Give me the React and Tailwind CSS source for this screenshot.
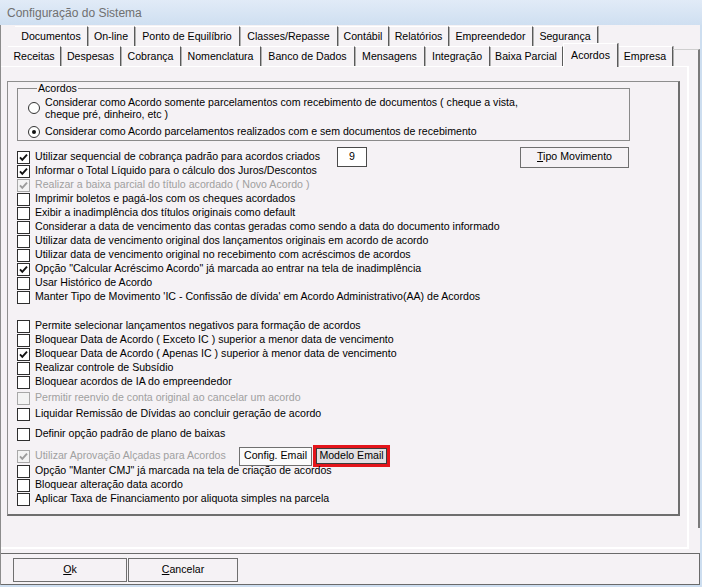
import React from "react";

const topTabs = [
  { label: "Documentos", w: "w-[73px]" },
  { label: "On-line", w: "w-[47px]" },
  { label: "Ponto de Equilíbrio", w: "w-[105px]" },
  { label: "Classes/Repasse", w: "w-[98px]" },
  { label: "Contábil", w: "w-[51px]" },
  { label: "Relatórios", w: "w-[60px]" },
  { label: "Empreendedor", w: "w-[84px]" },
  { label: "Segurança", w: "w-[65px]" },
];

const bottomTabs = [
  { label: "Receitas", w: "w-[53px]" },
  { label: "Despesas", w: "w-[60px]" },
  { label: "Cobrança", w: "w-[60px]" },
  { label: "Nomenclatura", w: "w-[80px]" },
  { label: "Banco de Dados", w: "w-[94px]" },
  { label: "Mensagens", w: "w-[70px]" },
  { label: "Integração", w: "w-[65px]" },
  { label: "Baixa Parcial", w: "w-[73px]" },
  { label: "Acordos", w: "w-[55px]", active: true },
  { label: "Empresa", w: "w-[55px]" },
];

const groupA = [
  { label: "Informar o Total Líquido para o cálculo dos Juros/Descontos", checked: true },
  { label: "Realizar a baixa parcial do título acordado ( Novo Acordo )", checked: true, disabled: true },
  { label: "Imprimir boletos e pagá-los com os cheques acordados" },
  { label: "Exibir a inadimplência dos títulos originais como default" },
  { label: "Considerar a data de vencimento das contas geradas como sendo a data do documento informado" },
  { label: "Utilizar data de vencimento original dos lançamentos originais em acordo de acordo" },
  { label: "Utilizar data de vencimento original no recebimento com acréscimos de acordos" },
  { label: "Opção \"Calcular Acréscimo Acordo\" já marcada ao entrar na tela de inadimplência", checked: true },
  { label: "Usar Histórico de Acordo" },
  { label: "Manter Tipo de Movimento 'IC - Confissão de dívida' em Acordo Administrativo(AA) de Acordos" },
];

const Box = ({ checked, disabled }) => (
  <span
    className={`w-[13px] h-[13px] shrink-0 border flex items-center justify-center ${
      disabled ? "border-[#a8a8a8] bg-[#f3f3f3]" : "border-[#2e2e2e] bg-white"
    }`}
  >
    {checked && (
      <svg width="9" height="9" viewBox="0 0 9 9">
        <path
          d="M1 4.3 L3.3 6.8 L8 1.6"
          fill="none"
          stroke={disabled ? "#9c9c9c" : "#111"}
          strokeWidth="1.9"
        />
      </svg>
    )}
  </span>
);

const Row = ({ label, checked, disabled, className = "", labelClass = "", children }) => (
  <div className={`flex items-center h-[14px] ${className}`}>
    <Box checked={checked} disabled={disabled} />
    <span className={`ml-[5px] whitespace-nowrap ${disabled ? "text-[#a0a0a0]" : ""} ${labelClass}`}>
      {label}
    </span>
    {children}
  </div>
);

const Radio = ({ checked }) => (
  <span className="w-[12px] h-[12px] shrink-0 rounded-full border border-[#333] bg-white flex items-center justify-center">
    {checked && <span className="w-[4px] h-[4px] rounded-full bg-[#111]" />}
  </span>
);

const Tab = ({ label, w, active }) =>
  active ? (
    <div
      className={`${w} h-[24px] -mt-[3px] z-10 bg-[#f5f2f5] flex items-center justify-center border-t border-l border-white border-r border-r-[#5a5a5a] shadow-[1px_0_0_#a8a8a8]`}
    >
      {label}
    </div>
  ) : (
    <div
      className={`${w} h-full flex items-center justify-center border-t border-white border-r border-r-[#5a5a5a] shadow-[1px_0_0_#b0b0b0]`}
    >
      {label}
    </div>
  );

export default function App() {
  return (
    <div className="w-[702px] h-[587px] overflow-hidden bg-[#cddef0] flex flex-col font-['Liberation_Sans',Arial,sans-serif] text-[10.6px] text-black">
      <div className="h-[25px] shrink-0 bg-gradient-to-b from-[#e1ebf7] to-[#cfdff1] flex items-center pl-[7px] text-[12px] text-[#707070]">
        Configuração do Sistema
      </div>

      <div className="h-[560px] mr-[2px] bg-[#f5f2f5] border-l border-[#8c8c8c] flex flex-col">
        <div className="flex mt-[1px]">
          <div className="w-[688px] flex flex-col">
            <div className="flex h-[20px] pl-[14px]">
              {topTabs.map((t) => (
                <Tab key={t.label} {...t} />
              ))}
            </div>
            <div className="flex h-[20px] pl-[7px]">
              {bottomTabs.map((t) => (
                <Tab key={t.label} {...t} />
              ))}
              <div className="flex-1 mt-[3px] border-t border-[#cfcfcf]" />
            </div>

            <div className="h-[483px] border-t border-white border-r-2 border-b-2 border-[#727272] border-t-white">
              <div className="ml-[6px] mt-[14px] w-[673px] h-[435px] border-l border-t border-[#8e8e8e] border-r-2 border-b-2 border-r-[#6e6e6e] border-b-[#6e6e6e]">
                <fieldset className="ml-[9px] w-[613px] border border-[#8a8a8a] pl-[10px] pb-[2px]">
                  <legend className="ml-[9px] px-[1px] leading-[12px]">Acordos</legend>
                  <div className="flex items-center pt-[2px]">
                    <Radio />
                    <div className="ml-[5px] leading-[12px]">
                      <div>Considerar como Acordo somente parcelamentos com recebimento de documentos ( cheque a vista,</div>
                      <div>cheque pré, dinheiro, etc )</div>
                    </div>
                  </div>
                  <div className="flex items-center h-[13px] mt-[5px]">
                    <Radio checked />
                    <span className="ml-[5px]">
                      Considerar como Acordo parcelamentos realizados com e sem documentos de recebimento
                    </span>
                  </div>
                </fieldset>

                <div className="pl-[9px] mt-[9px] flex flex-col">
                  <Row label="Utilizar sequencial de cobrança padrão para acordos criados" checked labelClass="w-[302px]">
                    <div className="w-[30px] h-[20px] shrink-0 bg-white border border-[#4a4a4a] flex items-center justify-center">
                      9
                    </div>
                    <button className="ml-[153px] w-[109px] h-[21px] shrink-0 border border-[#6f6f6f] bg-[#f5f2f5] flex items-center justify-center">
                      <span>
                        <span className="underline">T</span>ipo Movimento
                      </span>
                    </button>
                  </Row>
                  {groupA.map((r) => (
                    <Row key={r.label} {...r} />
                  ))}

                  <Row className="mt-[15px]" label="Permite selecionar lançamentos negativos para formação de acordos" />
                  <Row label="Bloquear Data de Acordo ( Exceto IC ) superior a menor data de vencimento" />
                  <Row label="Bloquear Data de Acordo ( Apenas IC ) superior à menor data de vencimento" checked />
                  <Row label="Realizar controle de Subsídio" />
                  <Row label="Bloquear acordos de IA do empreendedor" />
                  <Row className="mt-[2px]" label="Permitir reenvio de conta original ao cancelar um acordo" disabled />
                  <Row className="mt-[2px]" label="Liquidar Remissão de Dívidas ao concluir geração de acordo" />
                  <Row className="mt-[6px]" label="Definir opção padrão de plano de baixas" />
                  <Row
                    className="mt-[8px]"
                    label="Utilizar Aprovação Alçadas para Acordos"
                    checked
                    disabled
                    labelClass="w-[204px]"
                  >
                    <button className="w-[73px] h-[19px] shrink-0 border border-[#707070] bg-[#fbfbfb] flex items-center justify-center">
                      Config. Email
                    </button>
                    <div className="ml-[1px] w-[77px] h-[22px] shrink-0 border-[3px] border-[#e3151b]">
                      <button className="w-full h-full border border-[#3c3c3c] bg-[#e2dfe2] flex items-center justify-center">
                        Modelo Email
                      </button>
                    </div>
                  </Row>
                  <Row className="mt-[1px]" label={'Opção "Manter CMJ" já marcada na tela de criação de acordos'} />
                  <Row label="Bloquear alteração data acordo" />
                  <Row label="Aplicar Taxa de Financiamento por aliquota simples na parcela" />
                </div>
              </div>
            </div>
          </div>
          <div className="w-[11px] mt-[23px] h-[479px] border-t border-[#cfcfcf] border-r-2 border-r-[#7a7a7a]" />
        </div>

        <div className="mt-[4px] h-[32px] border-t border-b border-r border-[#6a6a6a] flex items-start pt-[4px] pl-[12px]">
          <button className="w-[114px] h-[24px] border border-[#6f6f6f] bg-[#f5f2f5] flex items-center justify-center">
            <span>
              <span className="underline">O</span>k
            </span>
          </button>
          <button className="ml-[1px] w-[110px] h-[24px] border border-[#6f6f6f] bg-[#f5f2f5] flex items-center justify-center">
            <span>
              <span className="underline">C</span>ancelar
            </span>
          </button>
        </div>
      </div>
    </div>
  );
}
